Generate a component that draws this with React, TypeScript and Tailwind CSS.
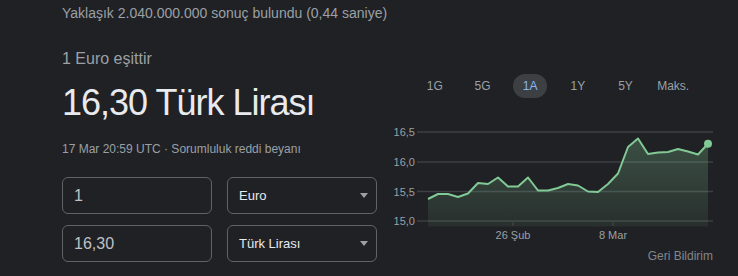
import React from "react";

const tabs = ["1G", "5G", "1A", "1Y", "5Y", "Maks."];

// chart points in page coordinates (svg viewBox uses the same)
const ys = [
  199, 194, 194, 197, 193.5, 183, 184, 177.5, 186.5, 186.5, 177.5, 190.5, 190.5, 188, 184,
  185.5, 191.5, 192, 184, 173.5, 147, 138.5, 154, 152.5, 152, 149, 151.5, 154.5, 143.7,
];
const pts = ys.map((y, i) => [428 + i * 10, y] as const);
const linePath = pts.map(([x, y], i) => `${i ? "L" : "M"}${x} ${y}`).join(" ");
const areaPath = `${linePath} L708 226.5 L428 226.5 Z`;

const grid = [
  { y: 132, label: "16,5" },
  { y: 162, label: "16,0" },
  { y: 191.5, label: "15,5" },
  { y: 221, label: "15,0" },
];

function Chart() {
  return (
    <svg width={330} height={128} viewBox="390 120 330 128" className="block">
      <defs>
        <linearGradient id="fill" x1="0" y1="138" x2="0" y2="227" gradientUnits="userSpaceOnUse">
          <stop offset="0" stopColor="#81c995" stopOpacity="0.28" />
          <stop offset="1" stopColor="#81c995" stopOpacity="0.08" />
        </linearGradient>
      </defs>
      {grid.map((g) => (
        <g key={g.label}>
          <line x1={417} x2={713} y1={g.y} y2={g.y} stroke="#3c4043" strokeWidth={1.5} />
          <text
            x={415}
            y={g.y + 4}
            textAnchor="end"
            fontSize={11}
            fill="#9aa0a6"
            fontFamily="Arial, 'Liberation Sans', sans-serif"
          >
            {g.label}
          </text>
        </g>
      ))}
      <path d={areaPath} fill="url(#fill)" />
      <path d={linePath} fill="none" stroke="#81c995" strokeWidth={2} strokeLinejoin="round" />
      <circle cx={708} cy={143.7} r={4} fill="#81c995" />
      {[
        { x: 513, label: "26 Şub" },
        { x: 613, label: "8 Mar" },
      ].map((t) => (
        <g key={t.label}>
          <line x1={t.x} x2={t.x} y1={221} y2={226} stroke="#3c4043" strokeWidth={1.5} />
          <text
            x={t.x}
            y={238.5}
            textAnchor="middle"
            fontSize={11}
            fill="#9aa0a6"
            fontFamily="Arial, 'Liberation Sans', sans-serif"
          >
            {t.label}
          </text>
        </g>
      ))}
    </svg>
  );
}

function Field({ value }: { value: string }) {
  return (
    <div className="flex h-[37px] w-[150px] items-center rounded-[6px] border border-[#5f6368] pl-[11px] text-[16px] text-[#bdc1c6]">
      {value}
    </div>
  );
}

function Select({ value }: { value: string }) {
  return (
    <div className="flex h-[37px] w-[150px] items-center justify-between rounded-[6px] border border-[#5f6368] pl-[11px] pr-[8px] text-[13px] text-[#e8eaed]">
      <span>{value}</span>
      <svg width="8" height="5" viewBox="0 0 8 5">
        <path d="M0 0 L8 0 L4 5 Z" fill="#9aa0a6" />
      </svg>
    </div>
  );
}

export default function App() {
  return (
    <div className="h-[276px] w-[738px] overflow-hidden bg-[#202124] font-['Liberation_Sans',Arial,sans-serif]">
      <div className="pl-[62px] pt-[5px] text-[14px] leading-[16px] text-[#9aa0a6]">
        Yaklaşık 2.040.000.000 sonuç bulundu (0,44 saniye)
      </div>

      <div className="flex pl-[62px]">
        <div className="w-[315px]">
          <div className="mt-[28px] text-[16px] leading-[20px] text-[#9aa0a6]">1 Euro eşittir</div>
          <div className="mt-[12px] text-[36px] leading-[44px] tracking-[-1px] text-[#e8eaed]">
            16,30 Türk Lirası
          </div>
          <div className="mt-[16px] text-[12px] leading-[16px] text-[#9aa0a6]">
            17 Mar 20:59 UTC · Sorumluluk reddi beyanı
          </div>
          <div className="mt-[20px] flex flex-col gap-[11px]">
            <div className="flex gap-[15px]">
              <Field value="1" />
              <Select value="Euro" />
            </div>
            <div className="flex gap-[15px]">
              <Field value="16,30" />
              <Select value="Türk Lirası" />
            </div>
          </div>
        </div>

        <div className="ml-[13px] w-[330px]">
          <div className="ml-[21px] mt-[53px] grid w-[286px] grid-cols-6">
            {tabs.map((t) => (
              <div key={t} className="flex justify-center">
                <div
                  className={
                    t === "1A"
                      ? "flex h-[24px] w-[34px] items-center justify-center rounded-full bg-[#3c4043] text-[12px] text-[#8ab4f8]"
                      : "flex h-[24px] items-center justify-center text-[12px] text-[#9aa0a6]"
                  }
                >
                  {t}
                </div>
              </div>
            ))}
          </div>
          <div className="mt-[22px]">
            <Chart />
          </div>
          <div className="pr-[7px] text-right text-[12px] leading-[16px] text-[#80868b]">Geri Bildirim</div>
        </div>
      </div>
    </div>
  );
}
